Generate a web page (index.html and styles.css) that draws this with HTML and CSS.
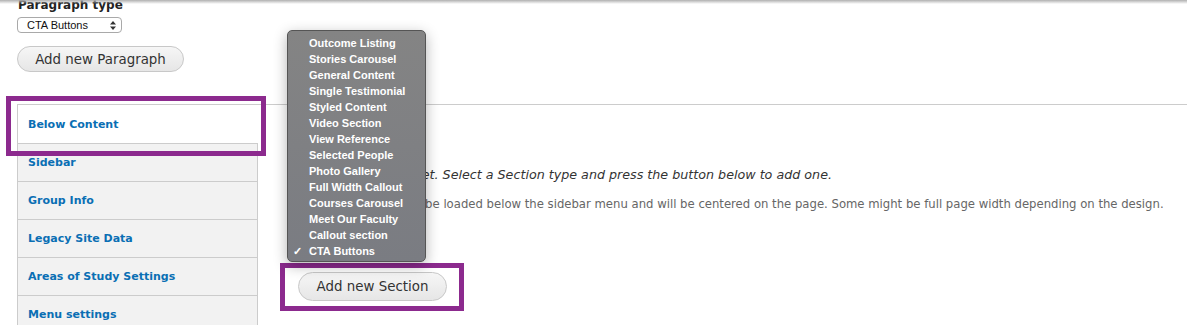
FILE: index.html
```html
<!DOCTYPE html>
<html>
<head>
<meta charset="utf-8">
<link rel="stylesheet" href="styles.css">
</head>
<body>
<div class="topshadow"></div>
<div class="page">
  <div class="field">
    <div class="label">Paragraph type</div>
    <div class="select"><span>CTA Buttons</span>
      <svg class="arrows" width="6" height="9" viewBox="0 0 6 9"><path d="M3 0 L6 3.5 H0 Z M3 9 L6 5.5 H0 Z" fill="#333"/></svg>
    </div>
    <button class="btn btn-para">Add new Paragraph</button>
  </div>

  <div class="vtabs">
    <ul class="tablist">
      <li class="tab active">Below Content</li>
      <li class="tab">Sidebar</li>
      <li class="tab">Group Info</li>
      <li class="tab">Legacy Site Data</li>
      <li class="tab">Areas of Study Settings</li>
      <li class="tab">Menu settings</li>
    </ul>
    <div class="pane">
      <p class="empty">No Section added yet. Select a Section type and press the button below to add one.</p>
      <p class="desc">All your Sections will be loaded below the sidebar menu and will be centered on the page. Some might be full page width depending on the design.</p>
      <button class="btn btn-section">Add new Section</button>
    </div>
  </div>
</div>

<div class="mark mark-tab"></div>
<div class="mark mark-btn"></div>

<ul class="popup">
  <li>Outcome Listing</li>
  <li>Stories Carousel</li>
  <li>General Content</li>
  <li>Single Testimonial</li>
  <li>Styled Content</li>
  <li>Video Section</li>
  <li>View Reference</li>
  <li>Selected People</li>
  <li>Photo Gallery</li>
  <li>Full Width Callout</li>
  <li>Courses Carousel</li>
  <li>Meet Our Faculty</li>
  <li>Callout section</li>
  <li class="checked"><span class="check">✓</span>CTA Buttons</li>
</ul>
</body>
</html>
```

FILE: styles.css
```css
html, body {
  margin: 0;
  padding: 0;
  background: #fff;
  overflow: hidden;
}
body {
  width: 1187px;
  height: 325px;
  position: relative;
  font-family: "DejaVu Sans", Verdana, sans-serif;
  color: #333;
}
.topshadow {
  position: absolute;
  left: 0; top: 0; right: 0;
  height: 4px;
  background: linear-gradient(#b0b0b0, rgba(255,255,255,0));
  z-index: 2;
}
.page {
  padding-left: 17px;
}
.field {
  display: flex;
  flex-direction: column;
  align-items: flex-start;
}
.label {
  font-weight: bold;
  font-size: 12px;
  line-height: 14px;
  margin-top: -2px;
  margin-left: 1px;
  color: #222;
}
.select {
  margin-top: 5px;
  height: 14px;
  border: 1px solid #a9a9a9;
  border-radius: 4px;
  display: flex;
  align-items: center;
  justify-content: space-between;
  padding: 0 5px 0 9px;
  box-sizing: content-box;
  width: 89px;
  font-family: "Liberation Sans", Arial, sans-serif;
  font-size: 11px;
  color: #111;
  background: #fff;
}
.arrows { display: block; }
.btn {
  font-family: "DejaVu Sans", Verdana, sans-serif;
  font-size: 13.4px;
  color: #333;
  border: 1px solid #c8c8c8;
  border-radius: 20px;
  background: linear-gradient(#f6f6f6, #e6e6e6);
  padding: 0;
  display: flex;
  align-items: center;
  justify-content: center;
}
.btn-para {
  margin-top: 13px;
  width: 167px;
  height: 26px;
}
.vtabs {
  display: flex;
  margin-top: 32px;
}
.tablist {
  list-style: none;
  margin: 0;
  padding: 0;
  width: 241px;
  flex: none;
}
.tab {
  height: 38px;
  box-sizing: border-box;
  border-left: 1px solid #ccc;
  border-right: 1px solid #ccc;
  border-top: 1px solid #ccc;
  background: #f2f2f2;
  font-weight: bold;
  font-size: 11px;
  color: #0a6fb4;
  padding-left: 10px;
  display: flex;
  align-items: center;
}
.tab.active {
  background: #fff;
  border-right: 1px solid #fff;
  height: 39px;
}
.pane {
  flex: 1;
  border-top: 1px solid #ccc;
  margin-left: -1px;
  padding-left: 41px;
}
.empty {
  margin: 62px 0 0 0;
  font-style: italic;
  font-size: 12.7px;
  line-height: 15px;
  color: #333;
  white-space: nowrap;
}
.desc {
  margin: 15px 0 0 0;
  text-indent: 3px;
  font-size: 11.66px;
  line-height: 15px;
  color: #666;
  white-space: nowrap;
}
.btn-section {
  margin-top: 60px;
  width: 149px;
  height: 29px;
}
.mark {
  position: absolute;
  border: 5px solid #8c2a8e;
  box-sizing: border-box;
  z-index: 3;
}
.mark-tab {
  left: 6px; top: 96px; width: 260px; height: 60px;
}
.mark-btn {
  left: 280px; top: 263px; width: 184px; height: 48px;
}
.popup {
  position: absolute;
  left: 287px;
  top: 30px;
  width: 139px;
  height: 232px;
  box-sizing: border-box;
  margin: 0;
  padding: 4px 0 0 0;
  list-style: none;
  background: linear-gradient(#848484, #7a7c82);
  border: 1px solid #555;
  border-radius: 5px;
  box-shadow: 0 4px 14px rgba(0,0,0,0.3);
  z-index: 4;
}
.popup li {
  position: relative;
  height: 16px;
  line-height: 16px;
  padding-left: 21px;
  font-family: "Liberation Sans", Arial, sans-serif;
  font-weight: bold;
  font-size: 11px;
  color: #fff;
}
.popup .check {
  position: absolute;
  left: 5px;
  top: 0;
  font-size: 11px;
}
```
